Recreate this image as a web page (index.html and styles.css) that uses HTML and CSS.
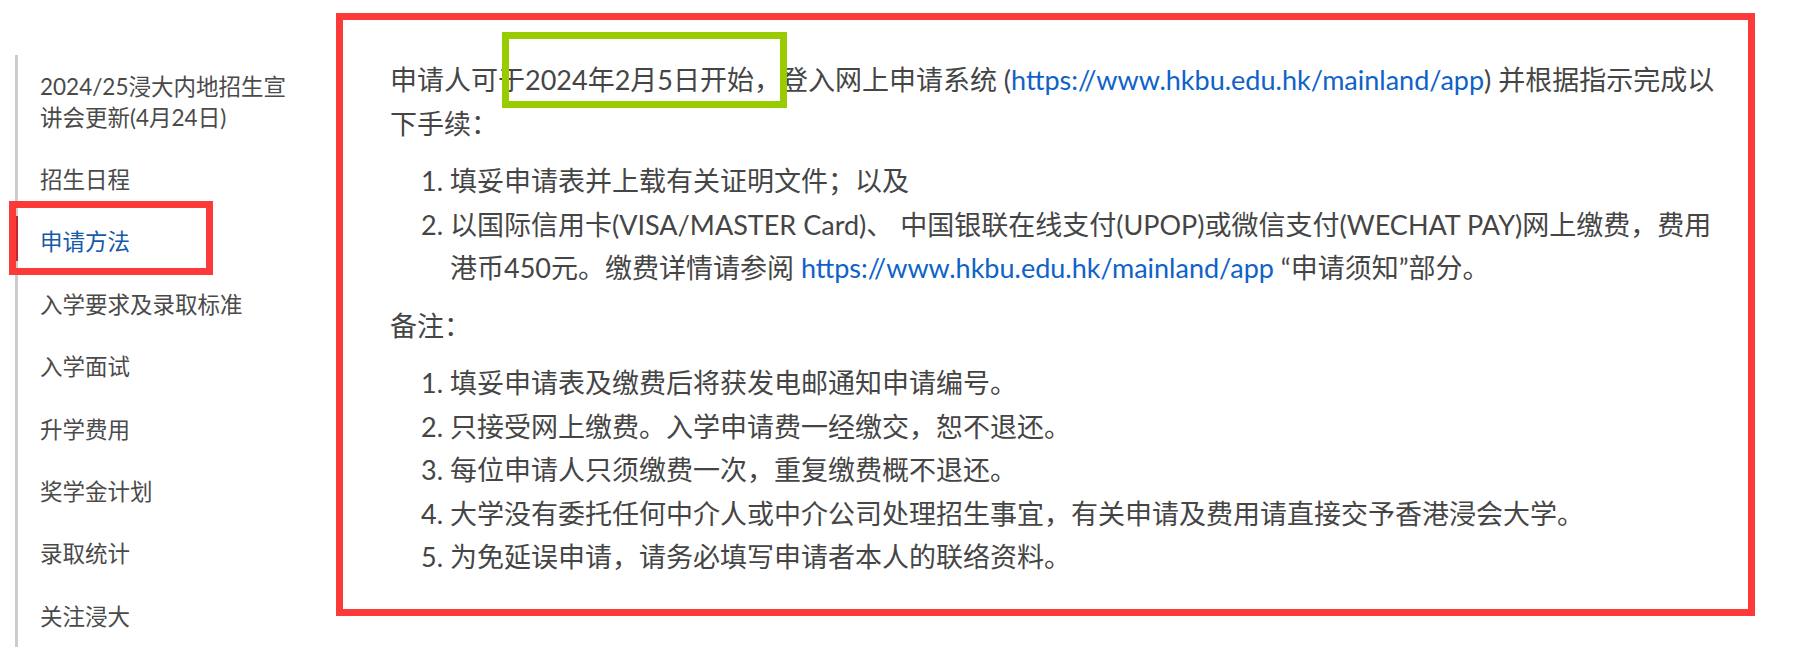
FILE: index.html
```html
<!DOCTYPE html>
<html lang="zh-CN">
<head>
<meta charset="utf-8">
<title>申请方法</title>
<link rel="stylesheet" href="styles.css">
</head>
<body>
<div class="page">
  <nav class="side-nav">
    <ul class="side-list">
      <li class="side-item"><a class="side-link" href="#">2024/25浸大内地招生宣讲会更新(4月24日)</a></li>
      <li class="side-item"><a class="side-link" href="#">招生日程</a></li>
      <li class="side-item is-active"><a class="side-link" href="#">申请方法</a><span class="mark mark-red"></span></li>
      <li class="side-item"><a class="side-link" href="#">入学要求及录取标准</a></li>
      <li class="side-item"><a class="side-link" href="#">入学面试</a></li>
      <li class="side-item"><a class="side-link" href="#">升学费用</a></li>
      <li class="side-item"><a class="side-link" href="#">奖学金计划</a></li>
      <li class="side-item"><a class="side-link" href="#">录取统计</a></li>
      <li class="side-item"><a class="side-link" href="#">关注浸大</a></li>
    </ul>
  </nav>
  <main class="content">
    <span class="mark mark-green"></span>
    <p class="para">申请人可于2024年2月5日开始，登入网上申请系统 (<a class="link" href="#">https://www.hkbu.edu.hk/mainland/app</a>) 并根据指示完成以下手续：</p>
    <ol class="steps">
      <li>填妥申请表并上载有关证明文件；以及</li>
      <li>以国际信用卡(VISA/MASTER Card)、 中国银联在线支付(UPOP)或微信支付(WECHAT PAY)网上缴费，费用港币450元。缴费详情请参阅 <a class="link" href="#">https://www.hkbu.edu.hk/mainland/app</a> “申请须知”部分。</li>
    </ol>
    <p class="para">备注：</p>
    <ol class="steps">
      <li>填妥申请表及缴费后将获发电邮通知申请编号。</li>
      <li>只接受网上缴费。入学申请费一经缴交，恕不退还。</li>
      <li>每位申请人只须缴费一次，重复缴费概不退还。</li>
      <li>大学没有委托任何中介人或中介公司处理招生事宜，有关申请及费用请直接交予香港浸会大学。</li>
      <li>为免延误申请，请务必填写申请者本人的联络资料。</li>
    </ol>
  </main>
</div>
</body>
</html>
```
FILE: styles.css
```css
* { box-sizing: border-box; }

html, body {
  margin: 0;
  padding: 0;
  background: #ffffff;
}

body {
  font-family: "Lato", "Noto Sans CJK SC", sans-serif;
  color: #454545;
  font-size: 22.5px;
}

.page {
  display: flex;
  align-items: flex-start;
  width: 1797px;
  height: 660px;
  overflow: hidden;
}

/* Sidebar */
.side-nav {
  width: 300px;
  margin-left: 15px;
  margin-top: 55px;
  flex: none;
}

.side-list {
  list-style: none;
  margin: 0;
  padding: 0;
  border-left: 3px solid #cccccc;
}

.side-item {
  position: relative;
}

.side-link {
  display: block;
  padding: 15.7px 20px 15.7px 22px;
  line-height: 31px;
  color: #4a4a4a;
  text-decoration: none;
}

.is-active .side-link {
  color: #1659a9;
}

.is-active::before {
  content: "";
  position: absolute;
  left: -3px;
  top: 5px;
  bottom: 12px;
  width: 3px;
  background: #c0282e;
}

/* Annotation marks */
.mark {
  position: absolute;
  border-style: solid;
  border-width: 7px;
  pointer-events: none;
}

.mark-red {
  border-color: #fc3a3a;
  left: -9px;
  top: -10px;
  width: 204px;
  height: 74px;
}

.mark-green {
  border-color: #99cc00;
  left: 159px;
  top: 12px;
  width: 285px;
  height: 76px;
}

/* Content box */
.content {
  position: relative;
  flex: none;
  width: 1419px;
  margin-left: 21px;
  margin-top: 13px;
  border: 7px solid #fc3a3a;
  padding: 38px 33px 30px 47px;
  font-size: 27px;
  line-height: 43.5px;
}

.para {
  margin: 0;
}

.steps {
  margin: 14px 0;
  padding-left: 60px;
}

.steps:last-child {
  margin-bottom: 0;
}

.link {
  color: #0e62c8;
  text-decoration: none;
}
```
